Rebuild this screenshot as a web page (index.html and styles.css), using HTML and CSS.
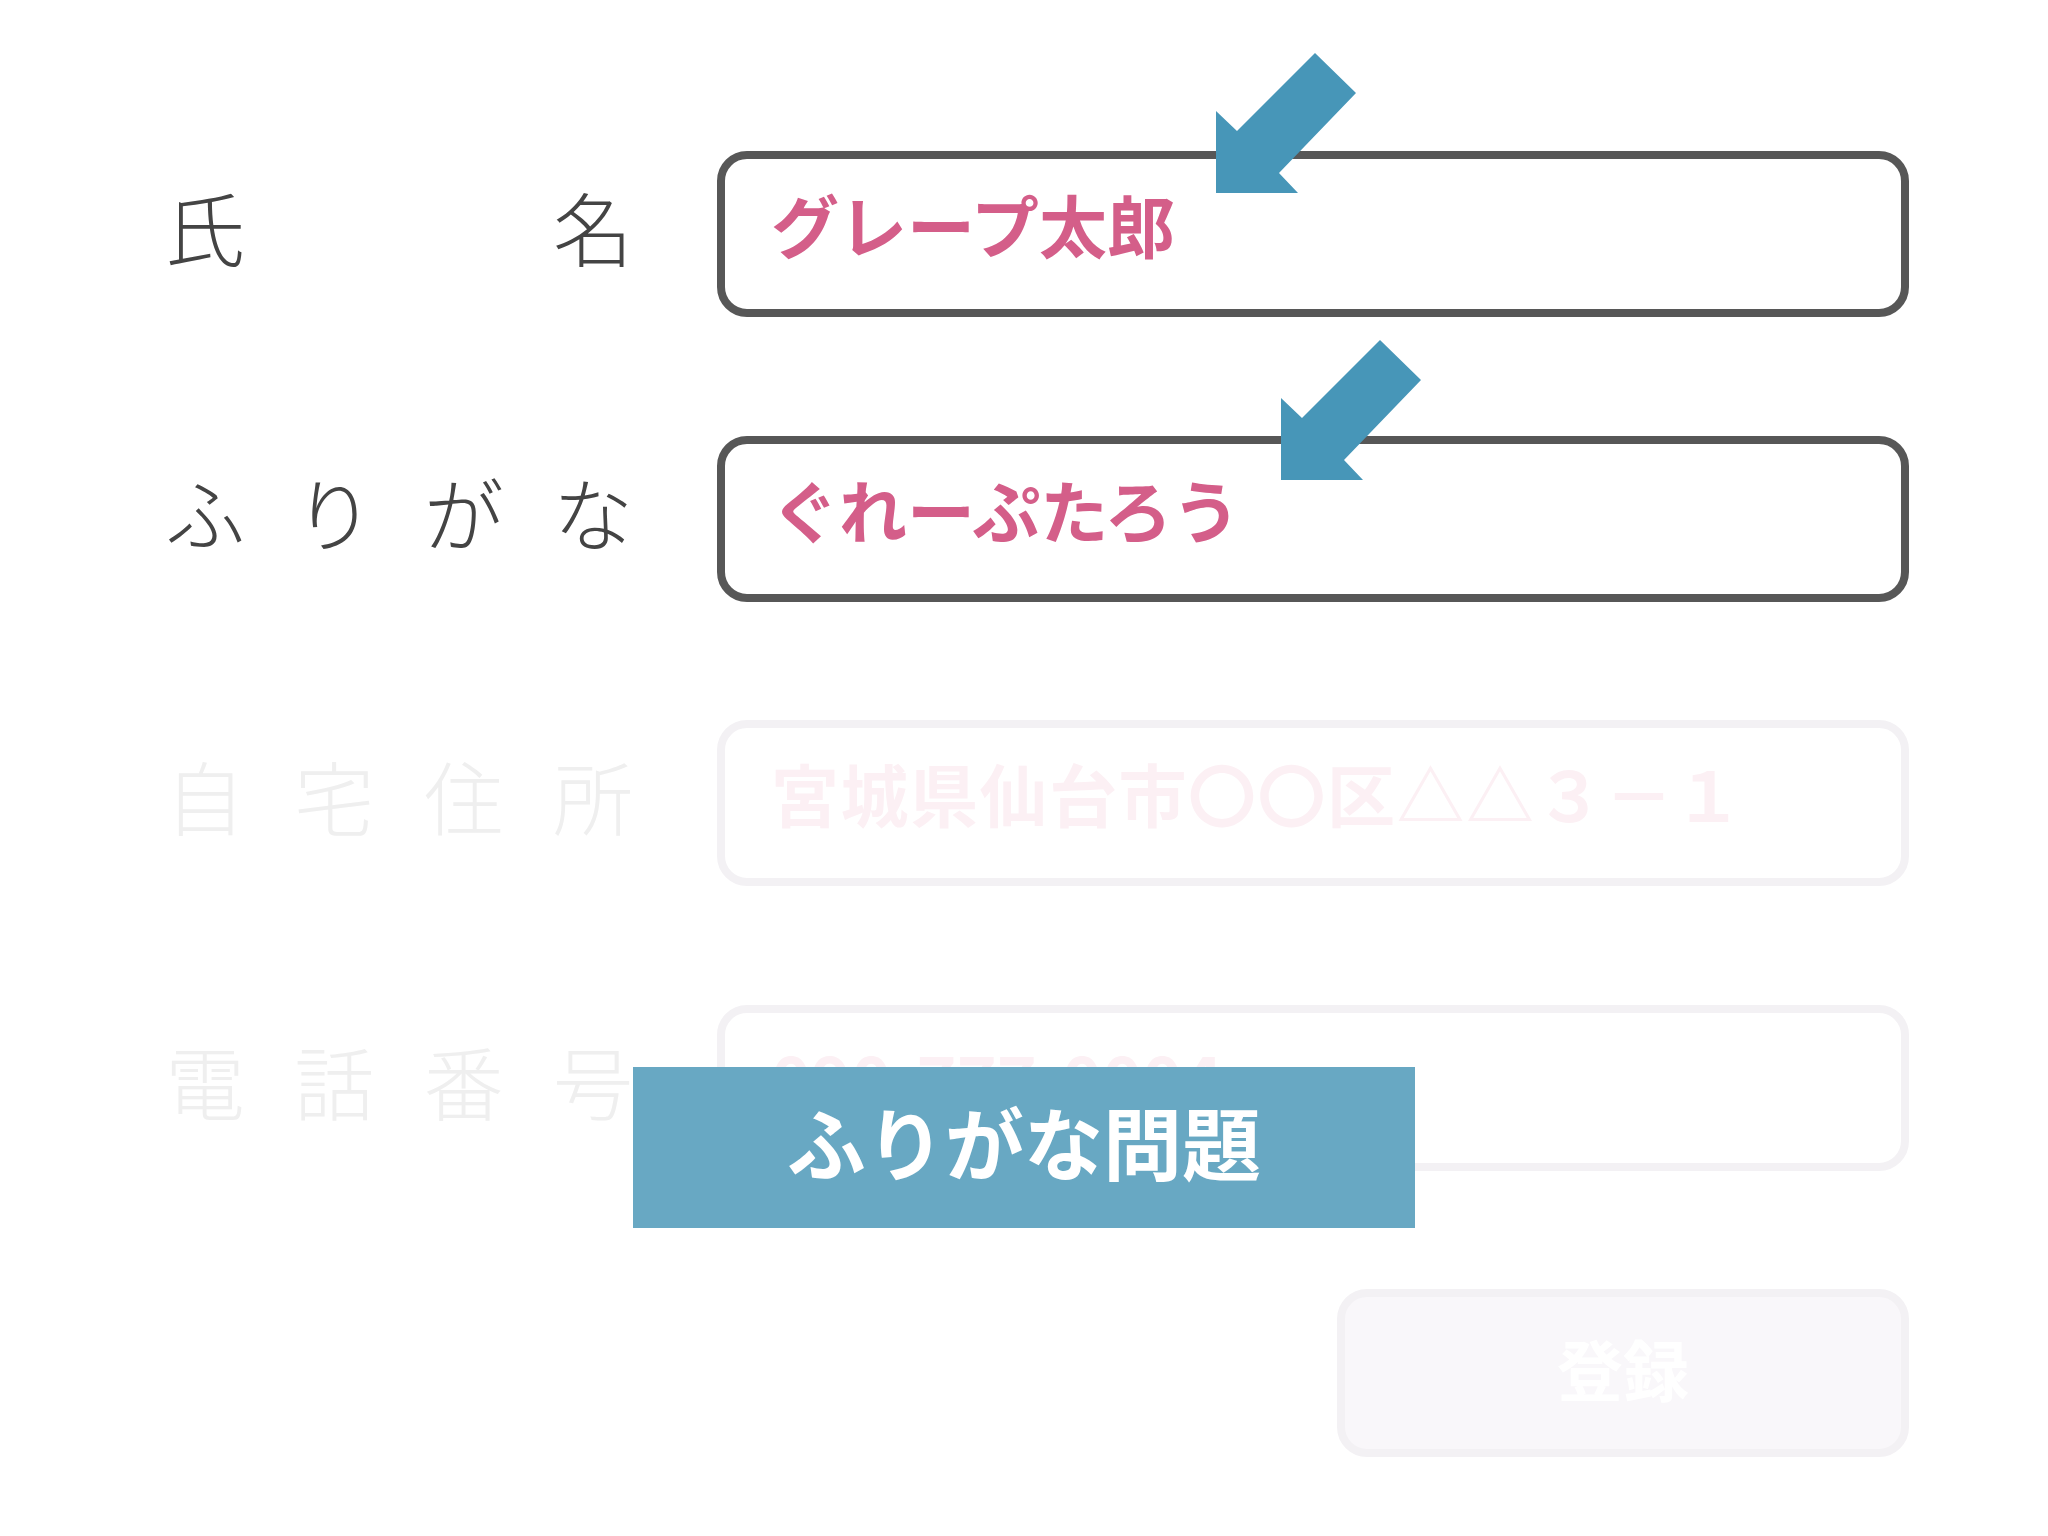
FILE: index.html
```html
<!DOCTYPE html>
<html lang="ja">
<head>
<meta charset="utf-8">
<title>ふりがな問題</title>
<link rel="stylesheet" href="styles.css">
</head>
<body>
<div class="stage">
  <form class="form">
    <div class="label"><span>氏</span><span>名</span></div>
    <div class="field"><span class="value">グレープ太郎</span></div>

    <div class="label"><span>ふ</span><span>り</span><span>が</span><span>な</span></div>
    <div class="field"><span class="value">ぐれーぷたろう</span></div>

    <div class="label faded"><span>自</span><span>宅</span><span>住</span><span>所</span></div>
    <div class="field faded"><span class="value address">宮城県仙台市〇〇区△△３－１</span></div>

    <div class="label faded"><span>電</span><span>話</span><span>番</span><span>号</span></div>
    <div class="field faded"><span class="value">090-777-0004</span></div>

    <div class="submit"><span>登録</span></div>
  </form>

  <svg class="arrow arrow-1" width="141" height="141" viewBox="0 0 141 141" aria-hidden="true">
    <polygon points="99,0 140,40 63,120 82,140 0,140 0,58 21,78"/>
  </svg>
  <svg class="arrow arrow-2" width="141" height="141" viewBox="0 0 141 141" aria-hidden="true">
    <polygon points="99,0 140,40 63,120 82,140 0,140 0,58 21,78"/>
  </svg>

  <div class="banner">ふりがな問題</div>
</div>
</body>
</html>
```
FILE: styles.css
```css
html, body {
  margin: 0;
  padding: 0;
  background: #ffffff;
}

body {
  font-family: "Noto Sans CJK JP", "Noto Sans", sans-serif;
}

.stage {
  position: relative;
  width: 2048px;
  height: 1536px;
  overflow: hidden;
}

.form {
  display: grid;
  grid-template-columns: 468px 1192px;
  grid-auto-rows: 166px;
  column-gap: 84px;
  row-gap: 118.5px;
  padding: 151px 0 0 165px;
  margin: 0;
}

.label {
  box-sizing: border-box;
  display: flex;
  justify-content: space-between;
  align-items: center;
  padding-bottom: 18px;
  font-size: 80px;
  font-weight: 300;
  color: #444444;
  line-height: 1;
}

.label.faded {
  color: #efefef;
}

.field {
  box-sizing: border-box;
  display: flex;
  align-items: center;
  border: 8px solid #575757;
  border-radius: 30px;
  padding: 0 0 20px 46px;
  background: #ffffff;
}

.field.faded {
  border-color: #f3f1f4;
}

.value {
  font-size: 68px;
  font-weight: 700;
  color: #d45e89;
  line-height: 1;
}

.field.faded .value {
  color: #fcf0f4;
}

.value.address {
  letter-spacing: 1.5px;
}

.submit {
  grid-column: 2;
  justify-self: end;
  box-sizing: border-box;
  width: 572px;
  height: 168px;
  display: flex;
  align-items: center;
  justify-content: center;
  padding-bottom: 12px;
  border: 8px solid #f3f1f4;
  border-radius: 30px;
  background: #f9f7fa;
  font-size: 66px;
  font-weight: 700;
  color: #ffffff;
  line-height: 1;
}

.arrow {
  position: absolute;
  fill: #4796b8;
}

.arrow-1 {
  left: 1216px;
  top: 53px;
}

.arrow-2 {
  left: 1281px;
  top: 340px;
}

.banner {
  position: absolute;
  left: 633px;
  top: 1067px;
  width: 782px;
  height: 161px;
  display: flex;
  align-items: center;
  justify-content: center;
  background: #68a8c3;
  color: #ffffff;
  font-size: 79px;
  font-weight: 700;
  line-height: 1;
  padding-bottom: 14px;
  box-sizing: border-box;
}
```
